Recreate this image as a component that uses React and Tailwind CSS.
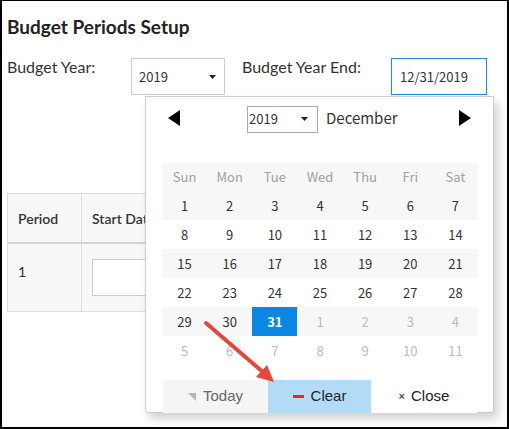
import React from 'react'

const WEEKDAYS = ['Sun', 'Mon', 'Tue', 'Wed', 'Thu', 'Fri', 'Sat']

const WEEKS = [
  [1, 2, 3, 4, 5, 6, 7],
  [8, 9, 10, 11, 12, 13, 14],
  [15, 16, 17, 18, 19, 20, 21],
  [22, 23, 24, 25, 26, 27, 28],
  [29, 30, 31, 1, 2, 3, 4],
  [5, 6, 7, 8, 9, 10, 11],
]

const calFont = { fontFamily: '"Noto Sans CJK SC", "Noto Sans", sans-serif' }

function Caret() {
  return (
    <svg width="7" height="4" viewBox="0 0 7 4" className="shrink-0">
      <path d="M0 0 L7 0 L3.5 4 Z" fill="#222" />
    </svg>
  )
}

function DatePopup() {
  return (
    <div
      className="absolute left-[143px] top-[95px] w-[349px] h-[317px] bg-white border border-[#cccccc] rounded-b-[4px] shadow-[4px_6px_10px_rgba(0,0,0,0.18)]"
      style={calFont}
    >
      {/* header */}
      <div className="flex items-center h-[36px] mt-[3px] pl-[22px] pr-[22px]">
        <svg width="12" height="16" viewBox="0 0 12 16">
          <path d="M12 0 L12 16 L0 8 Z" fill="#000" />
        </svg>
        <div className="ml-[67px] mt-[2px] w-[71px] h-[27px] border border-[#aaaaaa] flex items-center pl-[1px] pr-[9px] justify-between text-[13px] text-[#333]">
          <span>2019</span>
          <Caret />
        </div>
        <span className="ml-[8px] text-[15px] text-[#333]">December</span>
        <svg width="12" height="16" viewBox="0 0 12 16" className="ml-auto">
          <path d="M0 0 L0 16 L12 8 Z" fill="#000" />
        </svg>
      </div>

      {/* grid */}
      <div className="mt-[27px] ml-[16px] w-[316px]">
        <div className="grid grid-cols-7 h-[28px] bg-[#f7f7f7] text-[13px] text-[#a0a0a0]">
          {WEEKDAYS.map((d) => (
            <div key={d} className="flex items-center justify-center">{d}</div>
          ))}
        </div>
        {WEEKS.map((week, wi) => (
          <div key={wi} className={`grid grid-cols-7 h-[29px] text-[13px] ${wi % 2 === 0 ? 'bg-[#f7f7f7]' : 'bg-white'}`}>
            {week.map((d, di) => {
              const other = wi >= 4 && (wi === 5 || di >= 3)
              const selected = wi === 4 && d === 31
              return (
                <div
                  key={di}
                  className={`flex items-center justify-center ${
                    selected ? 'bg-[#0a87e3] text-white font-bold' : other ? 'text-[#bbbbbb]' : 'text-[#333]'
                  }`}
                >
                  {d}
                </div>
              )
            })}
          </div>
        ))}
      </div>

      {/* buttons */}
      <div className="flex mt-[15px] ml-[17px] h-[33px] text-[15px]" style={{ fontFamily: '"Liberation Sans", Arial, sans-serif' }}>
        <div className="w-[105px] bg-[#f5f5f5] flex items-center justify-center gap-[7px] text-[#666]">
          <svg width="8" height="8" viewBox="0 0 8 8">
            <path d="M0 0 L8 0 L8 8 Z" fill="#b5b5b5" />
          </svg>
          <span>Today</span>
        </div>
        <div className="w-[103px] bg-[#b3dbf8] flex items-center justify-center gap-[7px] text-[#222]">
          <span className="w-[11px] h-[3px] bg-[#e8261b]" />
          <span>Clear</span>
        </div>
        <div className="w-[106px] bg-white flex items-center justify-center gap-[6px] text-[#222]">
          <span className="text-[11px] text-[#555] font-bold">×</span>
          <span>Close</span>
        </div>
      </div>
    </div>
  )
}

export default function App() {
  return (
    <div
      className="relative w-[509px] h-[429px] bg-white border-2 border-t border-black overflow-hidden"
      style={{ fontFamily: 'Lato, "Noto Sans", sans-serif' }}
    >
      <div className="pl-[5px]">
        <h1 className="pt-[14px] text-[19px] leading-[24px] font-bold text-[#222]">Budget Periods Setup</h1>

        {/* form */}
        <div className="flex items-start mt-[19px]">
          <span className="w-[124px] -mt-[3px] text-[16px] text-[#333]">Budget Year:</span>
          <div
            className="w-[94px] h-[37px] border border-[#cccccc] flex items-center justify-between pl-[7px] pr-[8px] text-[13px] text-[#333]"
            style={calFont}
          >
            <span>2019</span>
            <Caret />
          </div>
          <span className="ml-[17px] w-[149px] -mt-[3px] text-[16px] text-[#333]">Budget Year End:</span>
          <div
            className="w-[96px] h-[37px] border border-[#1a87e0] flex items-center pl-[8px] text-[13px] text-[#333]"
            style={calFont}
          >
            12/31/2019
          </div>
        </div>

        {/* table */}
        <div className="mt-[98px] w-[480px] border border-[#dddddd] bg-[#f8f8f8]">
          <div className="flex h-[50px] border-b-2 border-[#d4d4d4] text-[14px] font-semibold text-[#333]">
            <div className="w-[74px] border-r border-[#dddddd] flex items-center pl-[10px]">Period</div>
            <div className="flex-1 flex items-center pl-[10px]">Start Date</div>
          </div>
          <div className="flex h-[67px] text-[14px] text-[#333]">
            <div className="w-[74px] border-r border-[#dddddd] pl-[10px] pt-[17px]">1</div>
            <div className="flex-1 pl-[10px] pt-[15px]">
              <div className="w-[140px] h-[37px] bg-white border border-[#cccccc]" />
            </div>
          </div>
        </div>
      </div>

      <DatePopup />

      {/* annotation arrow */}
      <svg className="absolute left-0 top-0 pointer-events-none" width="509" height="429">
        <line x1="204" y1="322" x2="262" y2="372" stroke="#e5483a" strokeWidth="4" strokeLinecap="round" />
        <path d="M272 381 L254 376 L265 364 Z" fill="#e5483a" />
      </svg>
    </div>
  )
}
